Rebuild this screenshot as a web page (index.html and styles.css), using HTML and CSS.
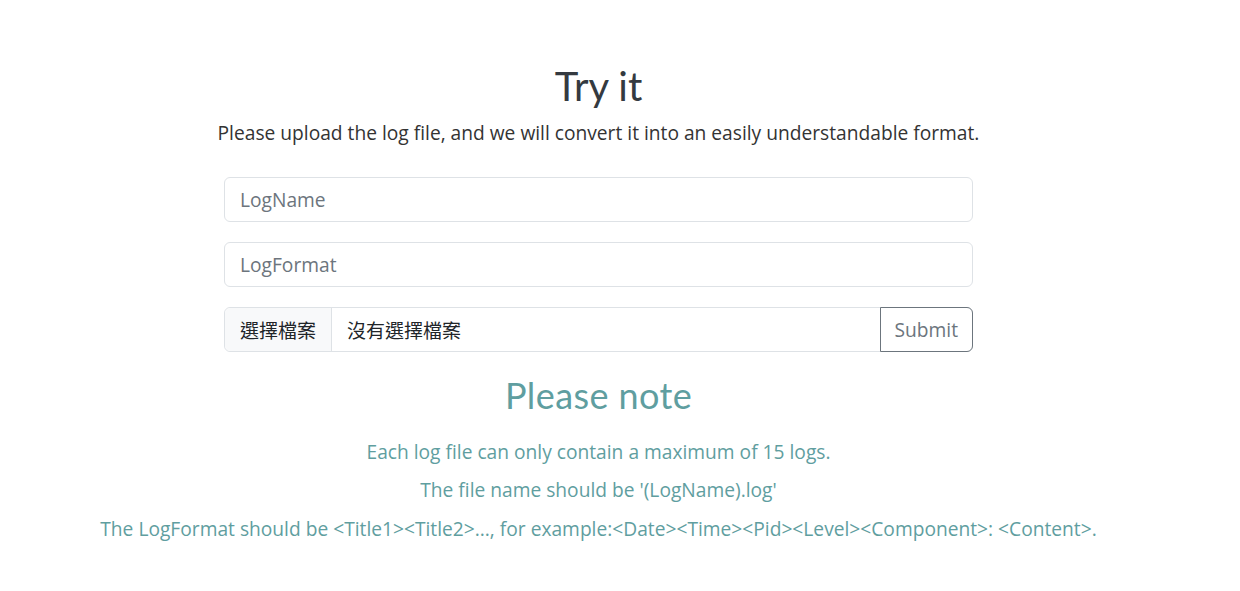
FILE: index.html
```html
<!DOCTYPE html>
<html lang="en">
<head>
<meta charset="utf-8">
<title>Try it</title>
<link rel="stylesheet" href="styles.css">
</head>
<body>
<main class="page">
  <section class="try">
    <h1 class="title">Try it</h1>
    <p class="lead">Please upload the log file, and we will convert it into an easily understandable format.</p>
    <form class="form">
      <input class="field" type="text" placeholder="LogName">
      <input class="field" type="text" placeholder="LogFormat">
      <div class="file-row">
        <label class="file-btn">選擇檔案</label>
        <span class="file-name">沒有選擇檔案</span>
        <button class="submit" type="button">Submit</button>
      </div>
    </form>
  </section>
  <section class="note">
    <h2 class="note-title">Please note</h2>
    <p class="note-text">Each log file can only contain a maximum of 15 logs.</p>
    <p class="note-text">The file name should be '(LogName).log'</p>
    <p class="note-text">The LogFormat should be &lt;Title1&gt;&lt;Title2&gt;..., for example:&lt;Date&gt;&lt;Time&gt;&lt;Pid&gt;&lt;Level&gt;&lt;Component&gt;: &lt;Content&gt;.</p>
  </section>
</main>
</body>
</html>
```
FILE: styles.css
```css
* { box-sizing: border-box; }
html, body { margin: 0; padding: 0; background: #fff; }
body {
  font-family: "Open Sans", "Noto Sans CJK TC", sans-serif;
  color: #333;
}
.page {
  width: 1197px;
  padding-top: 62px;
  display: flex;
  flex-direction: column;
  align-items: center;
}
.try {
  display: flex;
  flex-direction: column;
  align-items: center;
}
.title {
  font-family: "Lato", sans-serif;
  font-weight: 400;
  font-size: 40px;
  line-height: 1.2;
  color: #343a40;
  margin: 0 0 9px;
}
.lead {
  font-size: 19.2px;
  line-height: 1.5;
  margin: 0 0 29px;
  color: #333;
}
.form {
  width: 749px;
  display: flex;
  flex-direction: column;
  gap: 20px;
}
.field {
  height: 45px;
  border: 1px solid #dee2e6;
  border-radius: 6px;
  padding: 0 15px;
  font-family: "Open Sans", sans-serif;
  font-size: 19.2px;
  color: #212529;
  outline: none;
}
.field::placeholder { color: #6c757d; }
.file-row {
  display: flex;
  height: 45px;
  border: 1px solid #dee2e6;
  border-radius: 6px;
}
.file-btn {
  display: flex;
  align-items: center;
  padding: 0 15px;
  background: #f8f9fa;
  border-right: 1px solid #dee2e6;
  border-radius: 6px 0 0 6px;
  font-family: "Noto Sans CJK TC", sans-serif;
  font-size: 19px;
  color: #212529;
}
.file-name {
  flex: 1;
  display: flex;
  align-items: center;
  padding: 0 15px;
  font-family: "Noto Sans CJK TC", sans-serif;
  font-size: 19px;
  color: #212529;
}
.submit {
  margin: -1px -1px -1px 0;
  padding: 0 14px;
  background: #fff;
  border: 1px solid #6c757d;
  border-radius: 0 6px 6px 0;
  font-family: "Open Sans", sans-serif;
  font-size: 19.2px;
  color: #6c757d;
}
.note {
  margin-top: 22px;
  display: flex;
  flex-direction: column;
  align-items: center;
}
.note-title {
  font-family: "Lato", sans-serif;
  font-weight: 400;
  font-size: 36px;
  letter-spacing: 0.4px;
  line-height: 1.2;
  color: #5f9ea0;
  margin: 0 0 24px;
}
.note-text {
  font-size: 19.2px;
  line-height: 22.5px;
  margin: 0 0 16px;
  color: #5f9ea0;
  text-align: center;
}
```
